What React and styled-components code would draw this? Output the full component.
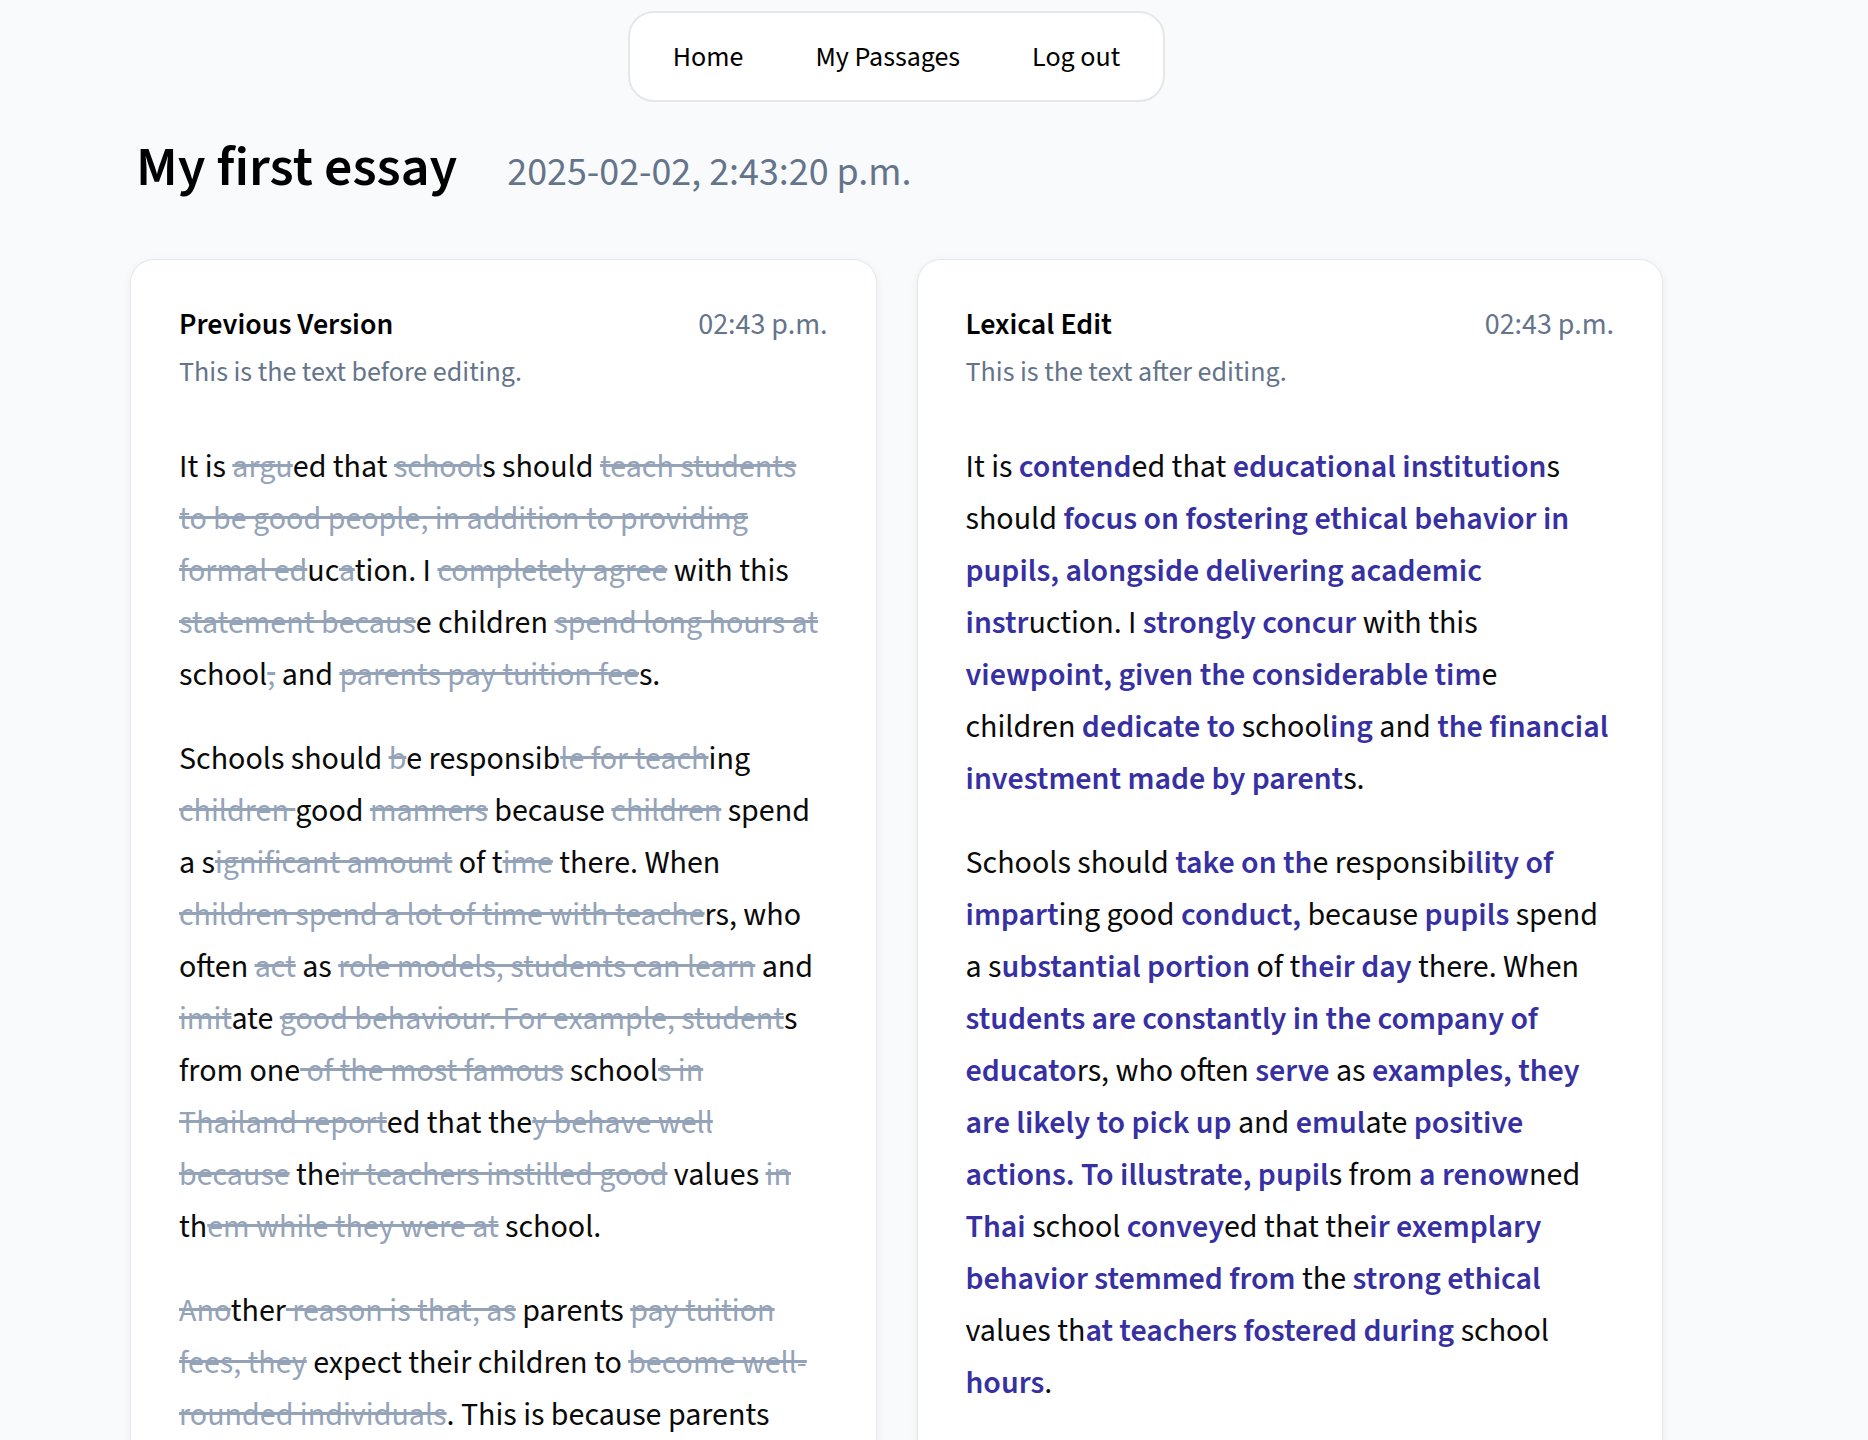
import React from 'react'
import styled, { createGlobalStyle } from 'styled-components'

const GlobalStyle = createGlobalStyle`
  body {
    margin: 0;
    background: #f8fafc;
    font-family: "Source Sans 3", Lato, sans-serif;
    color: #0a0a0a;
  }
`

const Page = styled.div`
  width: 1533px;
  margin-left: 130px;
  padding-top: 11px;
`

const Nav = styled.nav`
  display: flex;
  gap: 72px;
  width: max-content;
  margin: 0 auto;
  padding: 23px 43px 22px;
  background: #fff;
  border: 2px solid #e5e7eb;
  border-radius: 26px;
`

const NavLink = styled.a`
  font-size: 28px;
  line-height: 42px;
  color: #000;
  text-decoration: none;
`

const TitleRow = styled.header`
  display: flex;
  align-items: baseline;
  gap: 50px;
  margin-top: 32px;
  padding-left: 6px;
`

const Title = styled.h1`
  margin: 0;
  font-size: 56px;
  line-height: 1.2;
  font-weight: 600;
  color: #000;
`

const Stamp = styled.span`
  font-size: 40px;
  line-height: 1.2;
  color: #64748b;
`

const Columns = styled.div`
  display: grid;
  grid-template-columns: 1fr 1fr;
  gap: 40px;
  margin-top: 58px;
`

const Card = styled.section`
  background: #fff;
  border: 1px solid #e5e7eb;
  border-radius: 24px;
  box-shadow: 0 2px 10px rgba(15, 23, 42, 0.06);
  padding: 42px 48px 48px;
`

const CardHead = styled.div`
  display: flex;
  align-items: baseline;
  justify-content: space-between;
`

const CardTitle = styled.h2`
  margin: 0;
  font-size: 30px;
  line-height: 45px;
  font-weight: 600;
  color: #000;
`

const CardTime = styled.span`
  font-size: 30px;
  line-height: 45px;
  color: #64748b;
`

const CardNote = styled.p`
  margin: 4px 0 0;
  font-size: 28px;
  line-height: 42px;
  color: #64748b;
`

const Passage = styled.div`
  max-width: 644px;
  margin-top: 48px;
`

const Para = styled.p`
  margin: 0 0 32px;
  font-size: 32px;
  line-height: 52px;
`

const Removed = styled.span`
  color: #94a3b8;
  text-decoration: line-through;
`

const Added = styled.span`
  color: #3730a3;
  font-weight: 600;
`

// text in [brackets] is the part that changed
const before = [
  'It is [argu]ed that [school]s should [teach students to be good people, in addition to providing formal ed]uc[a]tion. I [completely agree] with this [statement becaus]e children [spend long hours at] school[,] and [parents pay tuition fee]s.',
  'Schools should [b]e responsib[le for teach]ing [children ]good [manners] because [children] spend a s[ignificant amount] of t[ime] there. When [children spend a lot of time with teache]rs, who often [act] as [role models, students can learn] and [imit]ate [good behaviour. For example, student]s from one[ of the most famous] school[s in Thailand report]ed that the[y behave well because] the[ir teachers instilled good] values [in] th[em while they were at] school.',
  '[Ano]ther[ reason is that, as] parents [pay tuition fees, they] expect their children to [become well-rounded individuals]. This is because parents',
]

const after = [
  'It is [contend]ed that [educational institution]s should [focus on fostering ethical behavior in pupils, alongside delivering academic instr]uction. I [strongly concur] with this [viewpoint, given the considerable tim]e children [dedicate to] school[ing] and [the financial investment made by parent]s.',
  'Schools should [take on th]e responsib[ility of impart]ing good [conduct,] because [pupils] spend a s[ubstantial portion] of t[heir day] there. When [students are constantly in the company of educato]rs, who often [serve] as [examples, they are likely to pick up] and [emul]ate [positive actions. To illustrate, pupil]s from [a renow]ned [Thai] school [convey]ed that the[ir exemplary behavior stemmed from] the [strong ethical] values th[at teachers fostered during] school [hours].',
]

function Marked ({ text, Mark }) {
  return text.split(/(\[[^\]]*\])/).filter(Boolean).map((part, i) =>
    part.startsWith('[')
      ? <Mark key={i}>{part.slice(1, -1)}</Mark>
      : <React.Fragment key={i}>{part}</React.Fragment>
  )
}

function VersionCard ({ title, note, paragraphs, Mark }) {
  return (
    <Card>
      <CardHead>
        <CardTitle>{title}</CardTitle>
        <CardTime>02:43 p.m.</CardTime>
      </CardHead>
      <CardNote>{note}</CardNote>
      <Passage>
        {paragraphs.map((p, i) => (
          <Para key={i}><Marked text={p} Mark={Mark} /></Para>
        ))}
      </Passage>
    </Card>
  )
}

export default function App () {
  return (
    <Page>
      <GlobalStyle />
      <Nav>
        <NavLink href="#">Home</NavLink>
        <NavLink href="#">My Passages</NavLink>
        <NavLink href="#">Log out</NavLink>
      </Nav>
      <TitleRow>
        <Title>My first essay</Title>
        <Stamp>2025-02-02, 2:43:20 p.m.</Stamp>
      </TitleRow>
      <Columns>
        <VersionCard
          title="Previous Version"
          note="This is the text before editing."
          paragraphs={before}
          Mark={Removed}
        />
        <VersionCard
          title="Lexical Edit"
          note="This is the text after editing."
          paragraphs={after}
          Mark={Added}
        />
      </Columns>
    </Page>
  )
}
